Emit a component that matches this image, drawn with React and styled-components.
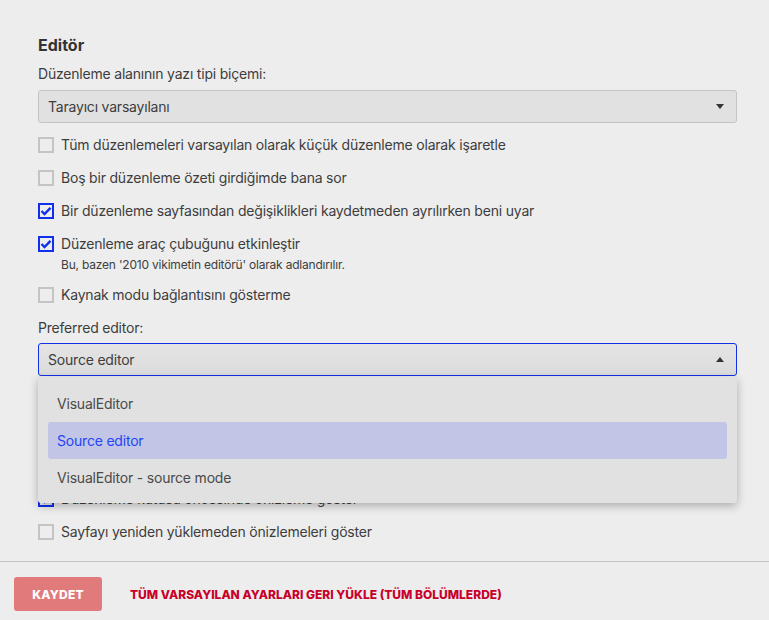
import React from "react";
import styled, { createGlobalStyle, css } from "styled-components";

const Global = createGlobalStyle`
  html, body { margin: 0; padding: 0; background: #ededed; }
  body { font-family: Inter, "Noto Sans", Arial, sans-serif; color: #3a3a3a; }
  * { box-sizing: border-box; }
`;

const Page = styled.div`
  width: 769px;
  min-height: 620px;
  background: #ededed;
  display: flex;
  flex-direction: column;
`;

const Content = styled.div`
  padding: 35px 32px 0 38px;
  display: flex;
  flex-direction: column;
  height: 562px;
  border-bottom: 1px solid #c4c4c4;
  overflow: hidden;
  letter-spacing: -0.2px;
`;

const Heading = styled.h3`
  margin: 0;
  font-size: 16px;
  line-height: 20px;
  font-weight: 700;
  color: #333;
  letter-spacing: 0;
`;

const FieldLabel = styled.div`
  font-size: 14px;
  line-height: 20px;
  margin-top: ${(p) => p.$mt || 0}px;
  color: #3d3d3d;
`;

const SelectWrap = styled.div`
  position: relative;
  margin-top: ${(p) => p.$mt || 0}px;
`;

const SelectBox = styled.div`
  height: 33px;
  display: flex;
  align-items: center;
  justify-content: space-between;
  padding: 0 12px 0 9px;
  background: #e1e1e1;
  border: 1px solid ${(p) => (p.$open ? "#1230e6" : "#c4c4c4")};
  border-radius: 3px;
  font-size: 14px;
  color: #3d3d3d;
  ${(p) =>
    p.$open &&
    css`
      background: linear-gradient(#e4e4e4, #dcdcdc);
    `}
`;

const Caret = styled.span`
  width: 0;
  height: 0;
  border-left: 4.5px solid transparent;
  border-right: 4.5px solid transparent;
  ${(p) =>
    p.$up
      ? css`border-bottom: 5px solid #333;`
      : css`border-top: 5px solid #333;`}
`;

const Menu = styled.div`
  position: absolute;
  top: 100%;
  left: 0;
  right: 0;
  margin-top: 1px;
  background: #e1e1e1;
  border-radius: 0 0 3px 3px;
  box-shadow: 0 3px 10px rgba(0, 0, 0, 0.28);
  padding: 8px 10px 7px 10px;
  z-index: 5;
  display: flex;
  flex-direction: column;
`;

const MenuItem = styled.div`
  height: 37px;
  display: flex;
  align-items: center;
  padding-left: 9px;
  border-radius: 3px;
  font-size: 14px;
  color: ${(p) => (p.$active ? "#1f45f5" : "#4a4a4a")};
  background: ${(p) => (p.$active ? "#c2c5e6" : "transparent")};
`;

const Row = styled.label`
  display: flex;
  align-items: flex-start;
  gap: 7px;
  margin-top: ${(p) => (p.$mt !== undefined ? p.$mt : 17)}px;
`;

const Box = styled.span`
  flex: none;
  width: 16px;
  height: 16px;
  border: 2px solid ${(p) => (p.$checked ? "#1030ee" : "#c4c4c4")};
  display: flex;
  align-items: center;
  justify-content: center;
`;

const RowText = styled.div`
  display: flex;
  flex-direction: column;
`;

const RowLabel = styled.span`
  font-size: 14px;
  line-height: 16px;
  color: #3d3d3d;
`;

const Help = styled.span`
  font-size: 12px;
  line-height: 12px;
  margin-top: 7px;
  color: #3d3d3d;
`;

const Footer = styled.div`
  display: flex;
  align-items: center;
  gap: 28px;
  padding: 15px 14px;
`;

const SaveButton = styled.button`
  width: 88px;
  height: 34px;
  border: none;
  border-radius: 3px;
  background: #e07a7b;
  color: #fff;
  font-family: inherit;
  font-size: 12px;
  font-weight: 800;
  text-transform: uppercase;
  letter-spacing: 0.2px;
  padding: 0;
`;

const ResetLink = styled.span`
  color: #c8002a;
  font-size: 12px;
  font-weight: 800;
  text-transform: uppercase;
`;

const Check = () => (
  <svg width="12" height="10" viewBox="0 0 12 10">
    <path d="M1.5 5 L4.5 8 L10.5 1.8" fill="none" stroke="#1030ee" strokeWidth="2.4" />
  </svg>
);

const CheckRow = ({ checked, label, help, mt }) => (
  <Row $mt={mt}>
    <Box $checked={checked}>{checked && <Check />}</Box>
    <RowText>
      <RowLabel>{label}</RowLabel>
      {help && <Help>{help}</Help>}
    </RowText>
  </Row>
);

export default function App() {
  return (
    <Page>
      <Global />
      <Content>
        <Heading>Editör</Heading>
        <FieldLabel $mt={9}>Düzenleme alanının yazı tipi biçemi:</FieldLabel>
        <SelectWrap $mt={6}>
          <SelectBox>
            <span>Tarayıcı varsayılanı</span>
            <Caret />
          </SelectBox>
        </SelectWrap>
        <CheckRow mt={14} label="Tüm düzenlemeleri varsayılan olarak küçük düzenleme olarak işaretle" />
        <CheckRow label="Boş bir düzenleme özeti girdiğimde bana sor" />
        <CheckRow checked label="Bir düzenleme sayfasından değişiklikleri kaydetmeden ayrılırken beni uyar" />
        <CheckRow
          checked
          label="Düzenleme araç çubuğunu etkinleştir"
          help="Bu, bazen '2010 vikimetin editörü' olarak adlandırılır."
        />
        <CheckRow mt={16} label="Kaynak modu bağlantısını gösterme" />
        <FieldLabel $mt={15}>Preferred editor:</FieldLabel>
        <SelectWrap $mt={5}>
          <SelectBox $open>
            <span>Source editor</span>
            <Caret $up />
          </SelectBox>
          <Menu>
            <MenuItem>VisualEditor</MenuItem>
            <MenuItem $active>Source editor</MenuItem>
            <MenuItem>VisualEditor - source mode</MenuItem>
          </Menu>
        </SelectWrap>
        <CheckRow mt={16} label="Sayfaları çift tıklayarak düzenle" />
        <CheckRow label="Bölümleri başlıklarındaki düzenle bağlantılarıyla düzenle" />
        <CheckRow label="Önizlemeyi ilk düzenlemede göster" />
        <CheckRow checked label="Düzenleme kutusu öncesinde önizleme göster" />
        <CheckRow label="Sayfayı yeniden yüklemeden önizlemeleri göster" />
      </Content>
      <Footer>
        <SaveButton>Kaydet</SaveButton>
        <ResetLink>Tüm varsayılan ayarları geri yükle (tüm bölümlerde)</ResetLink>
      </Footer>
    </Page>
  );
}
